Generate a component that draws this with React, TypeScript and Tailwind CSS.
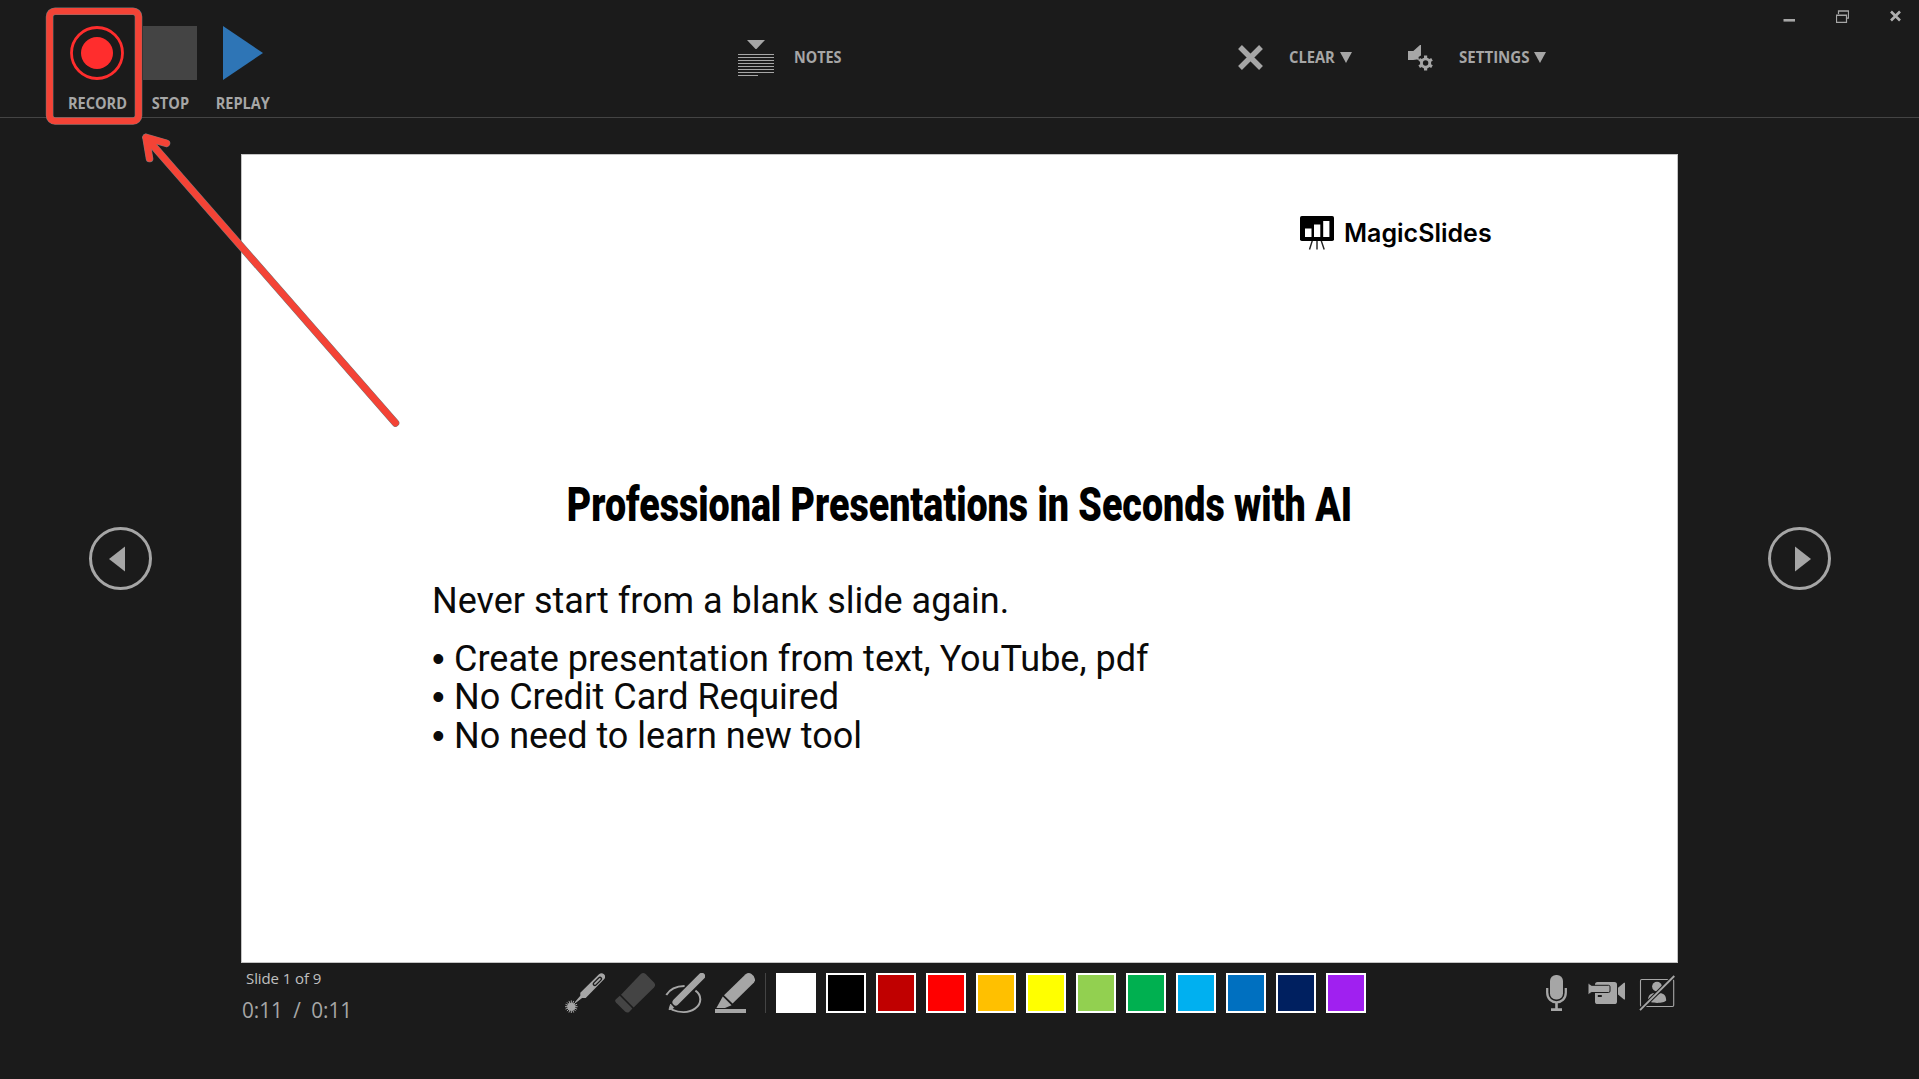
import React from 'react';
import clsx from 'clsx';

const SWATCHES = [
  'bg-white',
  'bg-black',
  'bg-[#c00000]',
  'bg-[#ff0000]',
  'bg-[#ffc000]',
  'bg-[#ffff00]',
  'bg-[#92d050]',
  'bg-[#00b050]',
  'bg-[#00b0f0]',
  'bg-[#0070c0]',
  'bg-[#002060]',
  'bg-[#a020f0]',
];

const BULLETS = [
  'Create presentation from text, YouTube, pdf',
  'No Credit Card Required',
  'No need to learn new tool',
];

const LABEL = "font-['Open_Sans',sans-serif] font-bold text-[16px] leading-5 text-[#a6a6a6] text-left whitespace-nowrap";

const LaserIcon = () => (
  <svg width="40" height="40" viewBox="0 0 40 40" fill="#a6a6a6">
    <path d="M15.3 19.7 34 1.2Q36.5-.8 39 1.2 41.2 3.4 39.3 6L20.7 25h-3.6L10.6 30l-.8-.8 5.5-6.5Z" />
    <path d="m29.8 11 5.2-5.2" stroke="#1b1b1b" strokeWidth="4.4" strokeLinecap="round" />
    <path d="m29.9 10.9 5-5" stroke="#a6a6a6" strokeWidth="1.8" strokeLinecap="round" />
    <circle cx="6.3" cy="33.7" r="4" />
    <path d="M6.3 27.4v12.6M0 33.7h12.6M1.9 29.3l8.8 8.8M1.9 38.1l8.8-8.8M3.9 27.9l4.8 11.6M8.7 27.9 3.9 39.5M.5 31.3l11.6 4.8M.5 36.1l11.6-4.8" stroke="#a6a6a6" />
  </svg>
);

const EraserIcon = () => (
  <svg width="40" height="40" viewBox="0 0 40 40" fill="#444">
    <path d="M6 21.7 25.8 1.1Q28.2-1 30.7 1.1L39 9.4Q41.2 12 39 14.4L18.6 34.4Z" />
    <path d="M4.8 22.8 17.4 35.5 14.4 38.7Q12.2 40.5 10 38.5L.9 29.5Q-.7 27.8.9 26.2Z" />
  </svg>
);

const PenIcon = () => (
  <svg width="40" height="40" viewBox="0 0 40 40" fill="none" stroke="#a6a6a6">
    <path d="M1.3 22C4.5 16.5 10.5 13 19.6 12.9" strokeWidth="2" />
    <path d="M30.4 17.6C37 22 37 31 30 35.6 24 39.8 15 40 6.8 36.6" strokeWidth="2" />
    <path d="M36.8 3.2 10.8 29.2" strokeWidth="6.6" strokeLinecap="round" />
    <path d="M5.6 31.2 8.6 34.5 7 36.3 4 36.6Z" fill="#a6a6a6" strokeWidth="1" />
  </svg>
);

const HighlighterIcon = () => (
  <svg width="40" height="40" viewBox="0 0 40 40" fill="#a6a6a6">
    <path d="M9 22.2 30.6 1.2Q33.5-.8 36.5.9 40.3 3.2 40 7.4L39 9.6 17.6 30.6Z" />
    <path d="M7.8 23.6 16.6 32.2 10 35H1.4Z" />
    <path d="M0 36h31v4H0z" />
  </svg>
);

const MicIcon = () => (
  <svg width="40" height="40" viewBox="0 0 40 40" fill="#a6a6a6">
    <rect x="13" y="2" width="13" height="24.4" rx="6" />
    <path d="M10.2 15v4.5c0 13.2 18.6 13.2 18.6 0V15" fill="none" stroke="#a6a6a6" strokeWidth="2.3" />
    <path d="M18.2 29.5h2.6v6h-2.6zM14 35.3h11v2.7H14z" />
  </svg>
);

const CameraIcon = () => (
  <svg width="40" height="40" viewBox="0 0 40 40" fill="#a6a6a6">
    <rect x="8" y="9" width="22" height="22" rx="2.6" />
    <path d="M1 9.8 4.4 12.3H21.5Q23 12.3 23 13.8V18Q23 19.5 21.5 19.5H4.4L1 22Z" stroke="#1b1b1b" strokeWidth="1" />
    <path d="M31 14.8 37 9.8h1V26.4h-1L31 21.4Z" />
    <path d="M10.8 22h4v2h-4z" fill="#1b1b1b" />
  </svg>
);

const PortraitOffIcon = () => (
  <svg width="40" height="40" viewBox="0 0 40 40" fill="#a6a6a6">
    <rect x="3.5" y="6.5" width="33.2" height="27" rx="1.2" fill="none" stroke="#a6a6a6" strokeWidth="1.1" />
    <circle cx="20" cy="13.6" r="4.9" />
    <path d="M11 27.5C11 22.5 13.5 20.3 17 20.3L20 22 23 20.3C26.8 20.3 29.2 22.5 29.2 27.5 27 30.7 13.3 30.7 11 27.5Z" />
    <path d="M3 37.2 37.3 3" stroke="#1b1b1b" strokeWidth="4" />
    <path d="M3 37.2 37.3 3" stroke="#a6a6a6" strokeWidth="1.9" />
  </svg>
);

const NotesIcon = () => (
  <svg className="shrink-0" width="36" height="36" viewBox="0 0 36 36" fill="#a6a6a6">
    <path d="M9 0h18l-8.5 9h-1Z" />
    <path d="M0 14h36v1H0zM0 17h36v1H0zM0 20h36v1H0zM0 23h36v1H0zM0 26h36v1H0zM0 29h36v1H0zM0 32h36v1H0zM0 35h20v1H0z" />
  </svg>
);

const SettingsIcon = () => (
  <svg width="26" height="26" viewBox="0 0 26 26" fill="#a6a6a6">
    <path d="M0 6h5.3L12 0h1v10.5L10.5 12 11 15 8.8 14.5 5.3 15H0Z" />
    <g stroke="#a6a6a6" strokeWidth="3.2">
      <path d="M17.6 10.6v14.8M11.2 14.3l12.8 7.4M11.2 21.7 24 14.3" />
    </g>
    <circle cx="17.6" cy="18" r="5.6" />
    <circle cx="17.6" cy="18" r="2.7" fill="#1b1b1b" />
  </svg>
);

const LogoIcon = () => (
  <svg width="34" height="35" viewBox="0 0 34 35">
    <path d="m12.5 24-3 9.5M17 24v9.5M21 24l3.2 9.5" stroke="#222" strokeWidth="1.4" />
    <rect width="34" height="25" rx="1.8" />
    <path d="M5 12.5h6.5V21H5zM14 8.4h6.3V21H14zM23.2 5h6.2v16h-6.2z" fill="#fff" />
  </svg>
);

const NavButton = ({ flip }: { flip?: boolean }) => (
  <div className={clsx('flex w-[241px] shrink-0 items-center justify-center', flip && 'pl-0.5')}>
    <button>
      <svg className={clsx('block', flip && '-scale-x-100')} width="63" height="63" viewBox="0 0 63 63">
        <circle cx="31.5" cy="31.5" r="30" fill="none" stroke="#a6a6a6" strokeWidth="3" />
        <path d="M20 32 36 19.5v25Z" fill="#a6a6a6" />
      </svg>
    </button>
  </div>
);

const Toolbar = () => (
  <header className="relative flex h-[118px] shrink-0 border-b border-[#444] pl-[60px]">
    <div className="flex pt-[26px] text-center">
      <button className="flex w-[74px] flex-col items-center">
        <svg width="54" height="54" viewBox="0 0 54 54">
          <circle cx="27" cy="27" r="25.5" fill="none" stroke="#ff2d2d" strokeWidth="2.8" />
          <circle cx="27" cy="27" r="16" fill="#ff2d2d" />
        </svg>
        <span className={clsx(LABEL, 'mt-[13px] scale-x-[0.91]')}>RECORD</span>
      </button>
      <button className="flex w-[72px] flex-col items-center">
        <span className="size-[54px] bg-[#444]" />
        <span className={clsx(LABEL, 'mt-[13px] scale-x-[0.91]')}>STOP</span>
      </button>
      <button className="flex w-[74px] flex-col items-center">
        <svg width="40" height="54" viewBox="0 0 40 54">
          <path d="M0 0 40 27 0 54Z" fill="#2e75b6" />
        </svg>
        <span className={clsx(LABEL, 'mt-[13px] scale-x-[0.91]')}>REPLAY</span>
      </button>
    </div>

    <button className="ml-[458px] flex h-[116px] w-[104px] items-center">
      <NotesIcon />
      <span className={clsx(LABEL, 'ml-5 mb-0.5 w-[48px] origin-left scale-x-90')}>NOTES</span>
    </button>

    <div className="ml-[396px] flex h-[115px] items-center">
      <button className="flex w-[170px] items-center">
        <svg width="25" height="25" viewBox="0 0 25 25">
          <path d="m2 2 21 21M23 2 2 23" stroke="#a6a6a6" strokeWidth="5.4" />
        </svg>
        <span className={clsx(LABEL, 'ml-[26px] mb-0.5 w-[46px] origin-left scale-x-[0.92]')}>CLEAR</span>
        <svg className="ml-[5px]" width="12" height="11" viewBox="0 0 12 11"><path d="M0 0h12L6 11Z" fill="#a6a6a6" /></svg>
      </button>
      <button className="flex items-center">
        <SettingsIcon />
        <span className={clsx(LABEL, 'ml-[25px] mb-0.5 w-[70px] origin-left scale-x-[0.94]')}>SETTINGS</span>
        <svg className="ml-[5px]" width="12" height="11" viewBox="0 0 12 11"><path d="M0 0h12L6 11Z" fill="#a6a6a6" /></svg>
      </button>
    </div>

    {/* Window controls */}
    <div className="ml-auto flex gap-[41px] pt-2.5 pr-[18px]">
      <svg className="ml-px" width="12" height="13" viewBox="0 0 12 13"><path d="M.5 9h12v2.6H.5z" fill="#a6a6a6" /></svg>
      <svg width="13" height="13" viewBox="0 0 13 13" fill="none" stroke="#a6a6a6">
        <path d="M2.5 4V.8h10v7.4H10.5M2.5 1.2h10M.5 5h10v7.3H.5ZM.5 5.4h10" strokeWidth="1.2" />
      </svg>
      <svg width="11" height="13" viewBox="0 0 11 13"><path d="m1 1.5 9 9M10 1.5l-9 9" stroke="#b0b0b0" strokeWidth="2.6" /></svg>
    </div>
  </header>
);

const Slide = () => (
  <section className="flex h-[809px] w-[1437px] flex-col border border-[#c4c4c4] bg-white text-black">
    <div className="mt-[61px] flex items-start pl-[1058px]">
      <LogoIcon />
      <span className="ml-[10px] mt-[1px] font-['Inter',sans-serif] text-[25px] font-semibold leading-[32px]">MagicSlides</span>
    </div>
    <h1 className="mt-[224px] flex h-[60px] items-center justify-center whitespace-nowrap font-['Roboto',sans-serif] text-[48px] font-black leading-[60px]">
      <span className="scale-x-[0.783]">Professional Presentations in Seconds with AI</span>
    </h1>
    <div className="mt-[47px] pl-[190px] font-['Roboto',sans-serif] text-[36px] leading-[38.5px] text-[#0a0a0a]">
      <p className="mb-[19px]">Never start from a blank slide again.</p>
      <ul>
        {BULLETS.map((item) => (
          <li key={item} className="flex">
            <span className="w-[22px] font-['Liberation_Sans',sans-serif]">•</span>
            {item}
          </li>
        ))}
      </ul>
    </div>
  </section>
);

const BottomBar = () => (
  <footer className="flex flex-1 px-[242px] pt-2.5">
    <div className="w-[323px] font-['Open_Sans',sans-serif] text-[#a6a6a6]">
      <p className="-mt-px pl-1 text-[15px] leading-3 tracking-[-0.1px] text-[#c0c0c0]">Slide 1 of 9</p>
      <p className="mt-[11px] origin-left scale-x-[0.94] text-[22px] leading-[28px]">
        <span>0:11</span>
        <span className="mx-[11px]">/</span>
        <span>0:11</span>
      </p>
    </div>
    <div className="flex h-10 gap-2.5">
      <LaserIcon />
      <EraserIcon />
      <PenIcon />
      <HighlighterIcon />
      <div className="w-px bg-[#444]" />
      {SWATCHES.map((color) => (
        <button key={color} className={clsx('size-10 border-2 border-white', color)} />
      ))}
    </div>
    <div className="ml-auto flex h-10 gap-2.5">
      <MicIcon />
      <CameraIcon />
      <PortraitOffIcon />
    </div>
  </footer>
);

// Red callout drawn over the record button
const Callout = () => (
  <svg className="pointer-events-none absolute left-0 top-0" width="420" height="440" viewBox="0 0 420 440" fill="none" strokeLinecap="round" strokeLinejoin="round">
    <g stroke="#777" strokeWidth="7.6">
      <rect x="49.6" y="11.2" width="88.9" height="109.8" rx="5.5" />
      <path d="M395.5 423 146 137.5M166.5 143.3 146 137.5 149.5 158.5" />
    </g>
    <g stroke="#f44336" strokeWidth="6.6">
      <rect x="49.6" y="11.2" width="88.9" height="109.8" rx="5.5" />
      <path d="M395.5 423 146 137.5M166.5 143.3 146 137.5 149.5 158.5" />
    </g>
  </svg>
);

export default function App() {
  return (
    <div className="relative flex h-screen w-full flex-col overflow-hidden bg-[#1b1b1b]">
      <Toolbar />
      <main className="mt-9 flex shrink-0">
        <NavButton />
        <Slide />
        <NavButton flip />
      </main>
      <BottomBar />
      <Callout />
    </div>
  );
}
